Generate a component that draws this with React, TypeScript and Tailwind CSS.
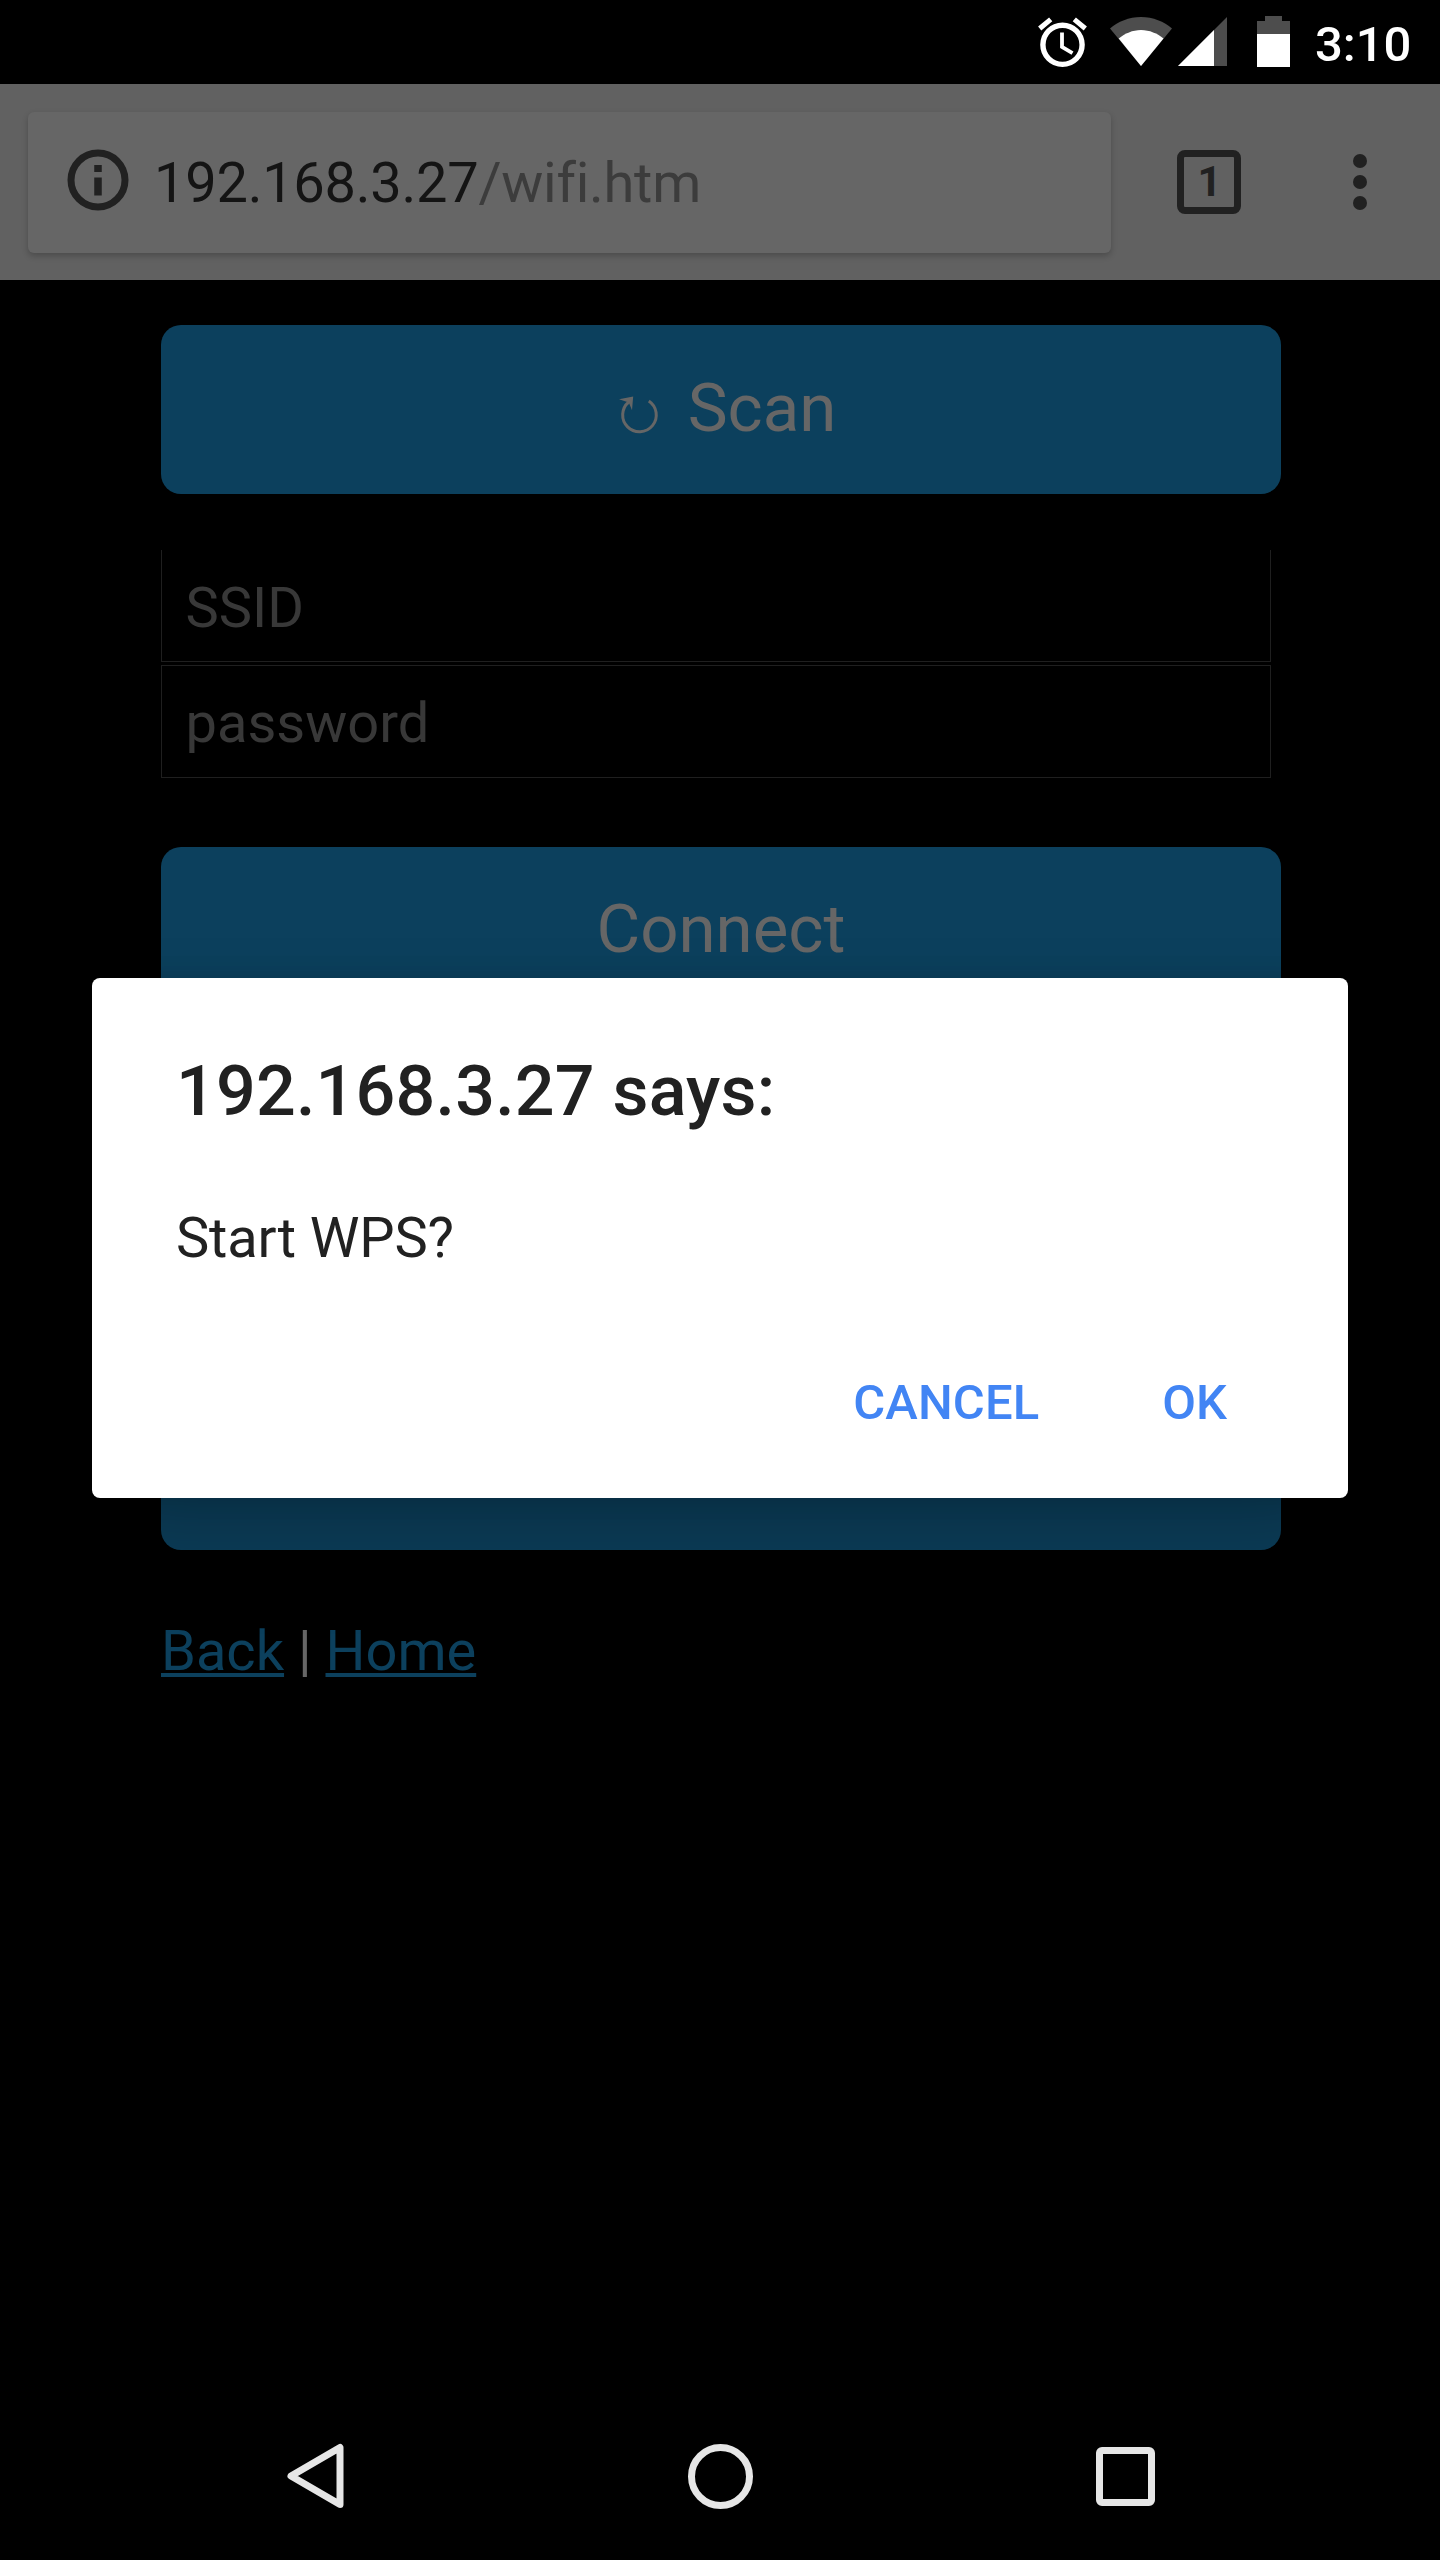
import React from "react";

function StatusBar() {
  return (
    <div className="flex h-[84px] items-start bg-black pl-[1036px] text-white">
      <svg className="h-[84px] w-[260px] shrink-0" viewBox="1036 0 260 84" fill="none">
        <circle cx="1062.5" cy="44.8" r="19.6" stroke="#fff" strokeWidth="5.4" />
        <path d="M1062 32.5v14.5l10.500 6.200" stroke="#fff" strokeWidth="3.800" />
        <path d="M1039.700 28.500l11-9.200M1085.300 28.500l-11-9.200" stroke="#fff" strokeWidth="5" />
        <path d="M1110 28.500C1118 21.500 1129 17 1141 17s23 4.500 31 11.500L1141 66z" fill="#4d4d4d" />
        <path d="M1118.700 38.500C1125 33.500 1132.500 30 1141 30s16.500 3.500 22.500 8.500L1141 66z" fill="#fff" />
        <path d="M1227 17v49h-49z" fill="#4d4d4d" />
        <path d="M1214 30v36h-36z" fill="#fff" />
        <path d="M1265 16h17v5h8v13h-33V21h8z" fill="#4d4d4d" />
        <path d="M1257 34h33v33h-33z" fill="#fff" />
      </svg>
      <div className="ml-[19px] mt-[16px] text-[49px] font-medium leading-[58px]">3:10</div>
    </div>
  );
}

function Toolbar() {
  return (
    <div className="flex h-[196px] items-center bg-[#616161] pl-7">
      <div className="flex h-[141px] w-[1083px] items-center rounded-[6px] bg-[#666] pl-[39px] shadow-[0_3px_6px_rgba(0,0,0,0.22)]">
        <svg className="mb-[5px] size-[62px] shrink-0" viewBox="0 0 62 62" fill="none">
          <circle cx="31" cy="31" r="27" stroke="#212121" strokeWidth="7" />
          <path d="M31 16v7M31 28.500v18" stroke="#212121" strokeWidth="7.500" />
        </svg>
        <div className="ml-[25px] mt-px whitespace-nowrap text-[56px] leading-[66px] tracking-[-0.26px] text-[#3c3c3c]">
          <span className="text-[#141414]">192.168.3.27</span>/wifi.htm
        </div>
      </div>
      <div className="ml-[66px] flex size-[64px] items-center justify-center rounded-[8px] border-[7px] border-[#212121] pl-px text-[42px] font-bold leading-[50px] text-[#212121]">
        1
      </div>
      <div className="ml-[112px] flex flex-col gap-[7px]">
        <span className="size-[14px] rounded-full bg-[#212121]" />
        <span className="size-[14px] rounded-full bg-[#212121]" />
        <span className="size-[14px] rounded-full bg-[#212121]" />
      </div>
    </div>
  );
}

const BUTTON =
  "flex h-[169px] w-[1120px] items-center justify-center rounded-[20px] bg-[#0c405d] text-[67.2px] leading-[80px] text-[#666]";

function ReloadIcon() {
  return (
    <svg className="ml-[13px] mr-[29px] mt-[15px] h-[38px] w-[40px]" viewBox="0 0 40 38" fill="none">
      <path d="M29.800 5A16.800 16.800 0 1 1 9.800 6" stroke="#666" strokeWidth="3" />
      <path d="M0 3.200L14.200.600 13 14.300 9.800 6.500z" fill="#666" />
    </svg>
  );
}

function WifiPage() {
  return (
    <div className="flex flex-col items-start bg-black pl-[161px] pt-[45px]">
      <button className={BUTTON + " pb-[4px]"}>
        <ReloadIcon />
        Scan
      </button>
      <div className="mt-[56px] flex h-[112px] w-[1110px] items-center border border-t-0 border-[#1f1f1f] pl-[23.5px] pt-[5px] text-[56px] leading-[66px] text-[#383838]">
        SSID
      </div>
      <div className="mt-[3px] flex h-[113px] w-[1110px] items-center border border-[#1f1f1f] pl-[23.5px] pt-[3px] text-[56px] leading-[66px] text-[#383838]">
        password
      </div>
      <button className={BUTTON + " mt-[69px] pb-[6px]"}>Connect</button>
      <button className={BUTTON + " mt-[365px] pb-[4px]"}>WPS</button>
      <div className="mt-[68px] whitespace-pre text-[56px] leading-[66px] text-[#666]">
        <a className="text-[#0c405d] underline decoration-[4px] underline-offset-[3px] [text-decoration-skip-ink:none]">Back</a>
        {" | "}
        <a className="text-[#0c405d] underline decoration-[4px] underline-offset-[3px] [text-decoration-skip-ink:none]">Home</a>
      </div>
    </div>
  );
}

function Dialog() {
  return (
    <div className="absolute left-[92px] top-[978px] flex h-[520px] w-[1256px] flex-col rounded-[8px] bg-white pl-[84px] pr-[121px] pt-[73px] text-[#212121] shadow-[0_48px_88px_rgba(0,0,0,0.24),0_0_24px_rgba(0,0,0,0.12)]">
      <h1 className="text-[70px] font-medium leading-[80px] tracking-[0.2px]">192.168.3.27 says:</h1>
      <p className="mt-[74px] text-[56px] leading-[66px] tracking-[-0.14px]">Start WPS?</p>
      <div className="mt-[103px] flex justify-end gap-[123px] text-[49px] font-medium leading-[58px] text-[#4285f4]">
        <button className="tracking-[0.1px]">CANCEL</button>
        <button>OK</button>
      </div>
    </div>
  );
}

function NavigationBar() {
  return (
    <div className="mt-auto flex h-[168px] items-center pl-[284px]">
      <svg className="h-[68px] w-[64px]" viewBox="0 0 64 68" fill="none">
        <path d="M56 5.500v57L7 34z" stroke="#e6e6e6" strokeWidth="7" strokeLinejoin="round" />
      </svg>
      <div className="ml-[340px] size-[65px] rounded-full border-[7px] border-[#e6e6e6]" />
      <div className="ml-[343px] size-[59px] rounded-[6px] border-[7px] border-[#e6e6e6]" />
    </div>
  );
}

export default function App() {
  return (
    <div className="relative flex h-[2560px] w-[1440px] flex-col overflow-hidden bg-black font-['Roboto',sans-serif]">
      <StatusBar />
      <Toolbar />
      <WifiPage />
      <NavigationBar />
      <Dialog />
    </div>
  );
}
